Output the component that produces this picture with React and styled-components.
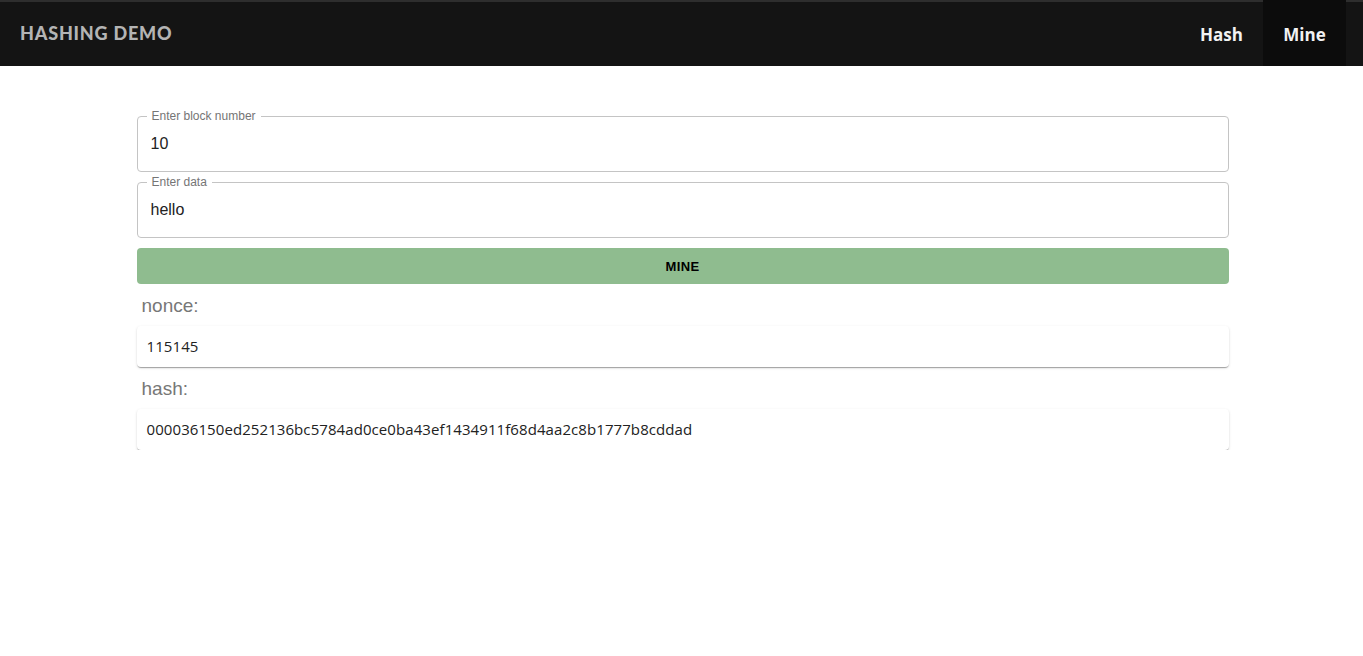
import React from 'react';
import styled, { createGlobalStyle } from 'styled-components';

const GlobalStyle = createGlobalStyle`
	body {
		margin: 0;
		background: #fff;
		font-family: 'Open Sans', Arial, sans-serif;
	}
`;

//navbar
const Nav = styled.nav`
	height: 66px;
	box-sizing: border-box;
	background: #141414;
	border-top: 2px solid #2e2e2e;
	display: flex;
	justify-content: space-between;
	align-items: stretch;
	padding: 0 17px 0 20px;
`;

const Brand = styled.h1`
	margin: 0;
	align-self: center;
	margin-top: -2px;
	font-family: Lato, 'Open Sans', sans-serif;
	font-weight: 900;
	font-size: 18px;
	letter-spacing: 0.8px;
	color: #b4b4b4;
`;

const Links = styled.ul`
	display: flex;
	list-style: none;
	margin: 0;
	padding: 0;
`;

const NavItem = styled.li`
	width: 83px;
	display: flex;
	align-items: center;
	justify-content: center;
	font-weight: 700;
	font-size: 17px;
	color: #f2f2f2;
	background: ${(p) => (p.active ? '#0c0c0c' : 'transparent')};
	margin-top: -2px;
	padding-top: 2px;
`;

//form
const Main = styled.main`
	width: 1092px;
	margin: 0 auto;
	padding: 50px 0 0 2px;
	display: flex;
	flex-direction: column;
`;

const Field = styled.div`
	position: relative;
	height: 56px;
	box-sizing: border-box;
	border: 1px solid #c4c4c4;
	border-radius: 4px;
	margin-bottom: 10px;
	display: flex;
	align-items: center;
	padding: 0 13px;
`;

const FieldLabel = styled.label`
	position: absolute;
	top: -8px;
	left: 9px;
	padding: 0 5px;
	background: #fff;
	font-family: Arial, 'Liberation Sans', sans-serif;
	font-size: 12px;
	line-height: 14px;
	color: #757575;
`;

const Input = styled.input`
	border: none;
	outline: none;
	width: 100%;
	padding: 0;
	font-family: Arial, 'Liberation Sans', sans-serif;
	font-size: 16px;
	color: #222;
	background: transparent;
`;

const MineButton = styled.button`
	height: 36px;
	border: none;
	border-radius: 4px;
	background: #8fbc8f;
	color: #000;
	font-family: Arial, 'Liberation Sans', sans-serif;
	font-weight: 700;
	font-size: 13px;
	letter-spacing: 0.4px;
	text-transform: uppercase;
	cursor: pointer;
`;

const ResultLabel = styled.div`
	font-family: Arial, 'Liberation Sans', sans-serif;
	font-size: 19px;
	color: #777;
	padding: 11px 5px 9px;
	line-height: 22px;
`;

const Paper = styled.div`
	background: #fff;
	border-radius: 4px;
	box-shadow: 0px 2px 1px -1px rgba(0, 0, 0, 0.2), 0px 1px 1px 0px rgba(0, 0, 0, 0.14),
		0px 1px 3px 0px rgba(0, 0, 0, 0.12);
	padding: 10px 10px;
	font-size: 15px;
	letter-spacing: 0.08px;
	line-height: 21px;
	color: #222;
`;

function App() {
	return (
		<>
			<GlobalStyle />
			<Nav>
				<Brand>HASHING DEMO</Brand>
				<Links>
					<NavItem>Hash</NavItem>
					<NavItem active>Mine</NavItem>
				</Links>
			</Nav>
			<Main>
				<Field>
					<FieldLabel>Enter block number</FieldLabel>
					<Input defaultValue="10" />
				</Field>
				<Field>
					<FieldLabel>Enter data</FieldLabel>
					<Input defaultValue="hello" />
				</Field>
				<MineButton>Mine</MineButton>
				<ResultLabel>nonce:</ResultLabel>
				<Paper>115145</Paper>
				<ResultLabel>hash:</ResultLabel>
				<Paper>000036150ed252136bc5784ad0ce0ba43ef1434911f68d4aa2c8b1777b8cddad</Paper>
			</Main>
		</>
	);
}

export default App;
